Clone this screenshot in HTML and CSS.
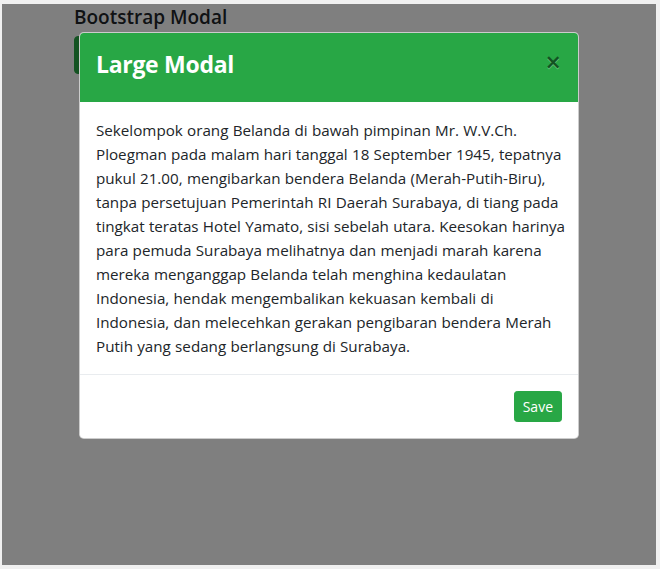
FILE: index.html
```html
<!DOCTYPE html>
<html lang="id">
<head>
<meta charset="utf-8">
<title>Bootstrap Modal</title>
<link rel="stylesheet" href="styles.css">
</head>
<body>
<div class="screen">
  <div class="viewport">
    <div class="page">
      <h5 class="page-title">Bootstrap Modal</h5>
      <button class="btn-open" type="button">Large Modal</button>
    </div>
    <div class="backdrop"></div>
    <div class="modal-layer">
      <div class="modal">
        <div class="modal-header">
          <h4 class="modal-title">Large Modal</h4>
          <button class="close" type="button" aria-label="Close">&times;</button>
        </div>
        <div class="modal-body">
          <p class="text">
            <span class="line">Sekelompok orang Belanda di bawah pimpinan Mr. W.V.Ch.</span>
            <span class="line">Ploegman pada malam hari tanggal 18 September 1945, tepatnya</span>
            <span class="line">pukul 21.00, mengibarkan bendera Belanda (Merah-Putih-Biru),</span>
            <span class="line">tanpa persetujuan Pemerintah RI Daerah Surabaya, di tiang pada</span>
            <span class="line">tingkat teratas Hotel Yamato, sisi sebelah utara. Keesokan harinya</span>
            <span class="line">para pemuda Surabaya melihatnya dan menjadi marah karena</span>
            <span class="line">mereka menganggap Belanda telah menghina kedaulatan</span>
            <span class="line">Indonesia, hendak mengembalikan kekuasan kembali di</span>
            <span class="line">Indonesia, dan melecehkan gerakan pengibaran bendera Merah</span>
            <span class="line">Putih yang sedang berlangsung di Surabaya.</span>
          </p>
        </div>
        <div class="modal-footer">
          <button class="btn-save" type="button">Save</button>
        </div>
      </div>
    </div>
  </div>
</div>
</body>
</html>
```
FILE: styles.css
```css
* { box-sizing: border-box; }
html, body { margin: 0; padding: 0; }
body {
  background: #f0f0f0;
  font-family: "Open Sans", "Noto Sans", sans-serif;
  color: #212529;
}
.screen {
  width: 660px;
  height: 569px;
  padding: 4px 4px 4px 2px;
}
.viewport {
  position: relative;
  width: 654px;
  height: 561px;
  background: #fff;
  overflow: hidden;
}
.page {
  width: 540px;
  margin: 0 auto;
  padding: 1px 15px 0;
}
.page-title {
  margin: 0 0 7px;
  font-size: 19px;
  font-weight: 600;
  line-height: 24px;
  color: #212529;
}
.btn-open {
  display: block;
  height: 38px;
  padding: 6px 12px;
  border: 1px solid #28a745;
  border-radius: 4px;
  background: #28a745;
  color: #fff;
  font-family: inherit;
  font-size: 16px;
  line-height: 24px;
}
.backdrop {
  position: absolute;
  inset: 0;
  background: rgba(0, 0, 0, 0.5);
}
.modal-layer {
  position: absolute;
  inset: 0;
  padding-top: 28px;
}
.modal {
  width: 500px;
  margin: 0 auto;
  background: #fff;
  border: 1px solid rgba(0, 0, 0, 0.2);
  border-radius: 4.8px;
  overflow: hidden;
}
.modal-header {
  display: flex;
  align-items: flex-start;
  padding: 16px;
  background: #28a745;
  border-bottom: 1px solid #28a745;
  color: #fff;
}
.modal-title {
  margin: 0 0 6px;
  font-size: 23px;
  font-weight: 700;
  line-height: 30px;
  letter-spacing: -0.3px;
}
.close {
  margin: -16px -15px -16px auto;
  padding: 16px;
  border: 0;
  background: transparent;
  font-family: inherit;
  font-size: 27px;
  font-weight: 600;
  line-height: 1;
  color: #000;
  opacity: 0.5;
  text-shadow: 0 1px 0 rgba(255, 255, 255, 0.6);
  position: relative;
  top: -1px;
}
.modal-body {
  padding: 16px;
}
.text {
  margin: 0;
  font-size: 15.2px;
  line-height: 24px;
  word-spacing: 0.3px;
  color: #212529;
}
.line {
  display: block;
  white-space: nowrap;
}
.modal-footer {
  display: flex;
  justify-content: flex-end;
  padding: 16px;
  border-top: 1px solid #e9ecef;
}
.btn-save {
  height: 31px;
  padding: 4px 8px;
  border: 1px solid #28a745;
  border-radius: 3.2px;
  background: #28a745;
  color: #fff;
  font-family: inherit;
  font-size: 14px;
  line-height: 21px;
}
```
